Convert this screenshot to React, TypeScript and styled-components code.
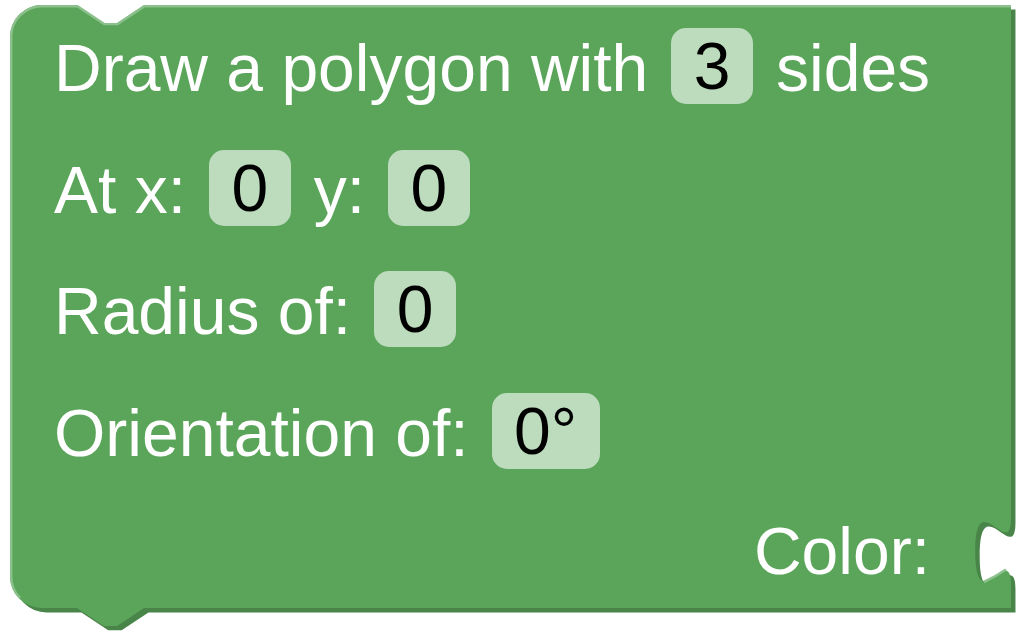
import React from "react";
import styled, { createGlobalStyle } from "styled-components";

const Global = createGlobalStyle`
  html, body { margin: 0; padding: 0; background: #ffffff; }
  body { font-family: "Liberation Sans", Arial, sans-serif; }
`;

const Stage = styled.div`
  position: relative;
  width: 1018px;
  height: 636px;
  overflow: hidden;
  background: #ffffff;
`;

const BlockShape = styled.svg`
  position: absolute;
  left: 0;
  top: 0;
  width: 1018px;
  height: 636px;
  z-index: 0;
`;

const Content = styled.div`
  position: relative;
  z-index: 1;
  box-sizing: border-box;
  width: 1018px;
  padding: 28px 88px 0 54px;
  display: flex;
  flex-direction: column;
  gap: 45.7px;
`;

const Row = styled.div<{ $end?: boolean }>`
  display: flex;
  align-items: flex-start;
  justify-content: ${(p) => (p.$end ? "flex-end" : "flex-start")};
  gap: 23px;
  height: 76px;
  margin-top: ${(p) => (p.$end ? "-4px" : "0")};
`;

const Label = styled.span`
  box-sizing: border-box;
  height: 76px;
  padding-top: 4px;
  line-height: 72px;
  font-size: 66px;
  color: #ffffff;
  white-space: pre;
`;

const Field = styled.span`
  box-sizing: border-box;
  height: 76px;
  padding: 0 22.5px;
  line-height: 76px;
  font-size: 66px;
  color: #000000;
  background: #bddbbd;
  border-radius: 15px;
  white-space: pre;
`;

const s = 4.47;
const mainPath = [
  "M 10 37",
  "A 32 32 0 0 1 42 5",
  "H 77",
  `l ${6 * s} ${4 * s} h ${3 * s} l ${6 * s} ${-4 * s}`,
  "H 1011",
  "V 518",
  `c 0 ${10 * s} ${-8 * s} ${-8 * s} ${-8 * s} ${7.5 * s}`,
  `s ${8 * s} ${-2.5 * s} ${8 * s} ${7.5 * s}`,
  "V 608",
  "H 144",
  `l ${-6 * s} ${4 * s} h ${-3 * s} l ${-6 * s} ${-4 * s}`,
  "H 42",
  "A 32 32 0 0 1 10 576",
  "Z",
].join(" ");

const lightPath = [
  "M 20 598",
  "A 30.8 30.8 0 0 1 11.2 576",
  "V 37",
  "A 30.8 30.8 0 0 1 42 6.2",
  "H 77.4",
  `l ${6 * s} ${4 * s} h ${3 * s} l ${6 * s} ${-4 * s}`,
  "H 1011",
].join(" ");

export default function App() {
  return (
    <Stage>
      <Global />
      <BlockShape viewBox="0 0 1018 636">
        <path d={mainPath} fill="#498449" transform="translate(4.47 4.47)" />
        <path d={mainPath} fill="#5ba55b" />
        <path d={lightPath} fill="none" stroke="#8cc08c" strokeWidth={2.4} />
        <path
          d="M 984 582 Q 995 577 1006 569.5"
          fill="none"
          stroke="#8cc08c"
          strokeWidth={2.6}
        />
      </BlockShape>
      <Content>
        <Row>
          <Label>Draw a polygon with</Label>
          <Field>3</Field>
          <Label>sides</Label>
        </Row>
        <Row>
          <Label>At x:</Label>
          <Field>0</Field>
          <Label>y:</Label>
          <Field>0</Field>
        </Row>
        <Row>
          <Label>Radius of:</Label>
          <Field>0</Field>
        </Row>
        <Row>
          <Label>Orientation of:</Label>
          <Field>0°</Field>
        </Row>
        <Row $end>
          <Label>Color:</Label>
        </Row>
      </Content>
    </Stage>
  );
}
